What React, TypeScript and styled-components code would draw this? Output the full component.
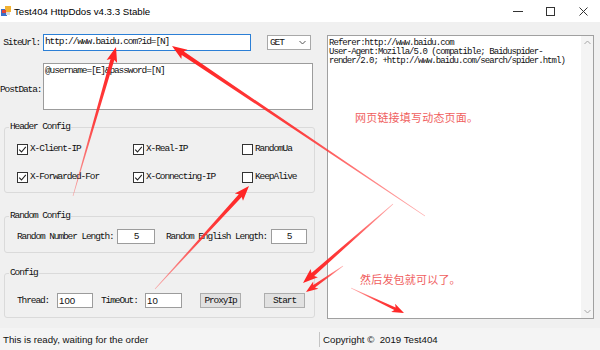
import React from "react";
import styled, { createGlobalStyle } from "styled-components";

const mono = `"Liberation Mono", "Noto Sans CJK SC", monospace`;
const sans = `"Liberation Sans", Arial, sans-serif`;

const GlobalStyle = createGlobalStyle`
  html, body {
    margin: 0;
    padding: 0;
    background: #ffffff;
  }
  body {
    width: 600px;
    height: 350px;
    overflow: hidden;
  }
`;

const Window = styled.div`
  position: relative;
  width: 600px;
  height: 350px;
  display: flex;
  flex-direction: column;
  background: #f0f0f0;
  overflow: hidden;
`;

const TitleBar = styled.div`
  height: 22px;
  flex: none;
  display: flex;
  align-items: center;
  background: #ffffff;
  font-family: ${sans};
  font-size: 9.7px;
  color: #000;
`;

const AppIcon = styled.svg`
  margin: 0 3px 0 1px;
  flex: none;
`;

const Controls = styled.div`
  margin-left: auto;
  display: flex;
  height: 100%;
`;

const ControlButton = styled.div`
  width: 33px;
  height: 100%;
  display: flex;
  align-items: center;
  justify-content: center;
`;

const Body = styled.div`
  flex: 1;
  display: flex;
  gap: 11px;
  padding: 12px 6px 0 0;
  min-height: 0;
`;

const LeftPanel = styled.div`
  width: 316px;
  flex: none;
  display: flex;
  flex-direction: column;
`;

const Text = styled.span<{ $w?: number; $ml?: number; $align?: string }>`
  font-family: ${mono};
  font-size: 9.5px;
  letter-spacing: -1.1px;
  line-height: 10px;
  color: #111;
  white-space: pre;
  flex: none;
  width: ${(p) => (p.$w ? `${p.$w}px` : "auto")};
  margin-left: ${(p) => p.$ml ?? 0}px;
  text-align: ${(p) => p.$align ?? "left"};
`;

const LogLine = styled.div`
  font-family: ${mono};
  font-size: 9px;
  letter-spacing: -0.95px;
  line-height: 9px;
  height: 9px;
  color: #111;
  white-space: pre;
`;

const UrlRow = styled.div`
  display: flex;
  align-items: center;
  height: 17px;
`;

const PostRow = styled.div`
  display: flex;
  align-items: flex-start;
  margin-top: 12px;
`;

const SideLabel = styled(Text)<{ $pt?: number }>`
  width: 40px;
  margin-right: 3px;
  padding-top: ${(p) => p.$pt ?? 0}px;
  text-align: right;
`;

const TextBox = styled.div<{ $w: number; $h: number; $focus?: boolean; $center?: boolean }>`
  box-sizing: border-box;
  width: ${(p) => p.$w}px;
  height: ${(p) => p.$h}px;
  flex: none;
  background: #fff;
  border: 1px solid ${(p) => (p.$focus ? "#2b7fd6" : "#9c9c9c")};
  padding: 2px 1px 0 1px;
  display: flex;
  align-items: flex-start;
  justify-content: ${(p) => (p.$center ? "center" : "flex-start")};
`;

const SansValue = styled.span`
  font-family: ${sans};
  font-size: 9.7px;
  line-height: 10px;
  color: #111;
`;

const Select = styled.div`
  box-sizing: border-box;
  margin-left: 16px;
  width: 44px;
  height: 15px;
  background: #fff;
  border: 1px solid #a8a8a8;
  display: flex;
  align-items: center;
  justify-content: space-between;
  padding: 0 4px 0 2px;
`;

const Group = styled.fieldset<{ $mt: number }>`
  margin: ${(p) => p.$mt}px 1px 0 4px;
  padding: 0;
  border: 1px solid #dadada;
  border-radius: 3px;
  min-width: 0;
`;

const Legend = styled.legend`
  margin-left: 4px;
  padding: 0 1px;
  height: 10px;
  font-family: ${mono};
  font-size: 9.5px;
  letter-spacing: -1.1px;
  line-height: 10px;
  color: #111;
`;

const CheckGrid = styled.div`
  display: grid;
  grid-template-columns: 116px 109px auto;
  grid-auto-rows: 14px;
  row-gap: 14px;
  padding: 10px 0 8px 12px;
`;

const CheckItem = styled.label`
  display: flex;
  align-items: center;
  gap: 2px;
`;

const Box = styled.span`
  box-sizing: border-box;
  width: 11px;
  height: 11px;
  border: 1px solid #333;
  background: #fff;
  display: flex;
  align-items: center;
  justify-content: center;
  flex: none;
`;

const InlineRow = styled.div<{ $pt: number; $pb: number }>`
  display: flex;
  align-items: center;
  height: 15px;
  padding: ${(p) => p.$pt}px 0 ${(p) => p.$pb}px 12px;
`;

const Button = styled.div<{ $ml: number }>`
  box-sizing: border-box;
  margin-left: ${(p) => p.$ml}px;
  width: 41px;
  height: 15px;
  flex: none;
  background: #e1e1e1;
  border: 1px solid #adadad;
  display: flex;
  align-items: center;
  justify-content: center;
`;

const RightPanel = styled.div`
  box-sizing: border-box;
  margin-top: 1px;
  width: 267px;
  height: 284px;
  flex: none;
  background: #fff;
  border: 1px solid #a0a0a0;
  display: flex;
`;

const LogText = styled.div`
  flex: 1;
  padding: 3px 0 0 1px;
  display: flex;
  flex-direction: column;
`;

const ScrollBar = styled.div`
  width: 12px;
  flex: none;
  background: #f4f4f4;
  display: flex;
  flex-direction: column;
  justify-content: space-between;
  align-items: center;
  padding: 4px 0;
`;

const StatusBar = styled.div`
  height: 22px;
  flex: none;
  display: flex;
  align-items: center;
  background: #f4f4f4;
  font-family: ${sans};
  font-size: 9.7px;
  color: #111;
`;

const StatusCell = styled.div`
  width: 316px;
  padding-left: 3px;
`;

const StatusDivider = styled.div`
  width: 1px;
  height: 15px;
  background: #c4c4c4;
  margin-right: 3px;
`;

const Overlay = styled.div`
  position: absolute;
  inset: 0;
  pointer-events: none;
`;

const Note = styled.span<{ $x: number; $y: number }>`
  position: absolute;
  left: ${(p) => p.$x}px;
  top: ${(p) => p.$y}px;
  font-family: "Noto Sans CJK SC", sans-serif;
  font-size: 11px;
  line-height: 12px;
  color: #f05e5e;
  letter-spacing: 0.2px;
  white-space: nowrap;
`;

const Check = ({ on }: { on?: boolean }) => (
  <Box>
    {on && (
      <svg width="9" height="9" viewBox="0 0 9 9">
        <path d="M1.2 4.6 L3.5 7 L7.8 1.8" fill="none" stroke="#222" strokeWidth="1.1" />
      </svg>
    )}
  </Box>
);

const Chevron = ({ up, color = "#555" }: { up?: boolean; color?: string }) => (
  <svg width="7" height="5" viewBox="0 0 7 5">
    <path d={up ? "M0.5 4 L3.5 1 L6.5 4" : "M0.5 1 L3.5 4 L6.5 1"} fill="none" stroke={color} strokeWidth="1" />
  </svg>
);

type ArrowDef = { x1: number; y1: number; x2: number; y2: number; sw?: number; hl?: number; hw?: number };

const arrows: ArrowDef[] = [
  { x1: 73, y1: 196, x2: 116, y2: 47 },
  { x1: 425, y1: 216, x2: 172, y2: 46 },
  { x1: 155, y1: 289, x2: 249, y2: 186 },
  { x1: 393, y1: 204, x2: 303, y2: 283 },
  { x1: 343, y1: 266, x2: 306, y2: 292, sw: 3, hl: 12, hw: 9 },
  { x1: 351, y1: 288, x2: 404, y2: 313, sw: 3, hl: 12, hw: 9 },
];

// tapered shaft plus a triangular head, as annotation tools draw them
function arrowPoints(a: ArrowDef) {
  const sw = a.sw ?? 4;
  const hl = a.hl ?? 15;
  const hw = a.hw ?? 11;
  const dx = a.x2 - a.x1;
  const dy = a.y2 - a.y1;
  const len = Math.hypot(dx, dy);
  const ux = dx / len;
  const uy = dy / len;
  const nx = -uy;
  const ny = ux;
  const bx = a.x2 - ux * hl;
  const by = a.y2 - uy * hl;
  const nb = bx + ux * 2;
  const nby = by + uy * 2;
  const pts = [
    [a.x1 + nx * 0.3, a.y1 + ny * 0.3],
    [nb + (nx * sw) / 2, nby + (ny * sw) / 2],
    [bx + (nx * hw) / 2, by + (ny * hw) / 2],
    [a.x2, a.y2],
    [bx - (nx * hw) / 2, by - (ny * hw) / 2],
    [nb - (nx * sw) / 2, nby - (ny * sw) / 2],
    [a.x1 - nx * 0.3, a.y1 - ny * 0.3],
  ];
  return pts.map((p) => `${p[0].toFixed(1)},${p[1].toFixed(1)}`).join(" ");
}

export default function App() {
  return (
    <>
      <GlobalStyle />
      <Window>
        <TitleBar>
          <AppIcon width="10" height="10" viewBox="0 0 10 10">
            <rect x="0" y="3" width="6" height="7" fill="#3a6fc9" />
            <rect x="4" y="0" width="6" height="6" fill="#f2b233" />
            <rect x="1" y="4" width="4" height="3" fill="#e0453a" />
            <rect x="5" y="6" width="4" height="3" fill="#d9d9d9" />
          </AppIcon>
          Test404 HttpDdos v4.3.3 Stable
          <Controls>
            <ControlButton>
              <svg width="10" height="8" viewBox="0 0 10 8">
                <path d="M0 4.5 H10" stroke="#333" strokeWidth="1" />
              </svg>
            </ControlButton>
            <ControlButton>
              <svg width="9" height="9" viewBox="0 0 9 9">
                <rect x="0.5" y="0.5" width="8" height="8" fill="none" stroke="#333" strokeWidth="1" />
              </svg>
            </ControlButton>
            <ControlButton>
              <svg width="9" height="9" viewBox="0 0 9 9">
                <path d="M0.5 0.5 L8.5 8.5 M8.5 0.5 L0.5 8.5" stroke="#333" strokeWidth="1" />
              </svg>
            </ControlButton>
          </Controls>
        </TitleBar>

        <Body>
          <LeftPanel>
            <UrlRow>
              <SideLabel>SiteUrl:</SideLabel>
              <TextBox $w={208} $h={17} $focus>
                <Text>http://www.baidu.com?id=[N]</Text>
              </TextBox>
              <Select>
                <Text>GET</Text>
                <Chevron />
              </Select>
            </UrlRow>

            <PostRow>
              <SideLabel $pt={22}>PostData:</SideLabel>
              <TextBox $w={270} $h={47}>
                <Text>@username=[E]&amp;password=[N]</Text>
              </TextBox>
            </PostRow>

            <Group $mt={12}>
              <Legend>Header Config</Legend>
              <CheckGrid>
                <CheckItem>
                  <Check on />
                  <Text>X-Client-IP</Text>
                </CheckItem>
                <CheckItem>
                  <Check on />
                  <Text>X-Real-IP</Text>
                </CheckItem>
                <CheckItem>
                  <Check />
                  <Text>RandomUa</Text>
                </CheckItem>
                <CheckItem>
                  <Check on />
                  <Text>X-Forwarded-For</Text>
                </CheckItem>
                <CheckItem>
                  <Check on />
                  <Text>X-Connecting-IP</Text>
                </CheckItem>
                <CheckItem>
                  <Check />
                  <Text>KeepAlive</Text>
                </CheckItem>
              </CheckGrid>
            </Group>

            <Group $mt={18}>
              <Legend>Random Config</Legend>
              <InlineRow $pt={8} $pb={8}>
                <Text $w={100}>Random Number Length:</Text>
                <TextBox $w={38} $h={15} $center>
                  <Text>5</Text>
                </TextBox>
                <Text $w={105} $ml={11}>Random English Length:</Text>
                <TextBox $w={36} $h={15} $center>
                  <Text>5</Text>
                </TextBox>
              </InlineRow>
            </Group>

            <Group $mt={15}>
              <Legend>Config</Legend>
              <InlineRow $pt={15} $pb={9}>
                <Text $w={40}>Thread:</Text>
                <TextBox $w={36} $h={15}>
                  <SansValue>100</SansValue>
                </TextBox>
                <Text $w={44} $ml={8}>TimeOut:</Text>
                <TextBox $w={37} $h={15}>
                  <SansValue>10</SansValue>
                </TextBox>
                <Button $ml={18}>
                  <Text>ProxyIp</Text>
                </Button>
                <Button $ml={23}>
                  <Text>Start</Text>
                </Button>
              </InlineRow>
            </Group>
          </LeftPanel>

          <RightPanel>
            <LogText>
              <LogLine>Referer:http://www.baidu.com</LogLine>
              <LogLine>User-Agent:Mozilla/5.0 (compatible; Baiduspider-</LogLine>
              <LogLine>render/2.0; +http://www.baidu.com/search/spider.html)</LogLine>
            </LogText>
            <ScrollBar>
              <Chevron up color="#a6a6a6" />
              <Chevron color="#a6a6a6" />
            </ScrollBar>
          </RightPanel>
        </Body>

        <StatusBar>
          <StatusCell>This is ready, waiting for the order</StatusCell>
          <StatusDivider />
          <span>Copyright ©&nbsp; 2019 Test404</span>
        </StatusBar>

        <Overlay>
          <svg width="600" height="350" viewBox="0 0 600 350">
            <defs>
              {arrows.map((a, i) => (
                <linearGradient
                  key={i}
                  id={`ag${i}`}
                  gradientUnits="userSpaceOnUse"
                  x1={a.x1}
                  y1={a.y1}
                  x2={a.x2}
                  y2={a.y2}
                >
                  <stop offset="0" stopColor="#ff4a4a" stopOpacity="0.45" />
                  <stop offset="0.5" stopColor="#ff2c2c" stopOpacity="0.9" />
                  <stop offset="1" stopColor="#ff2222" stopOpacity="1" />
                </linearGradient>
              ))}
            </defs>
            {arrows.map((a, i) => (
              <polygon key={i} points={arrowPoints(a)} fill={`url(#ag${i})`} />
            ))}
          </svg>
          <Note $x={355} $y={111}>网页链接填写动态页面。</Note>
          <Note $x={360} $y={273}>然后发包就可以了。</Note>
        </Overlay>
      </Window>
    </>
  );
}
